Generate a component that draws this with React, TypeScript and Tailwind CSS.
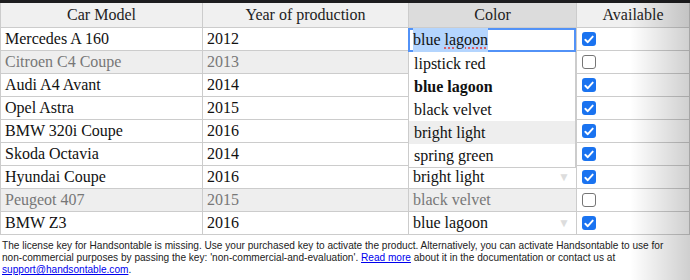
import React from "react";

type Row = { model: string; year: string; color: string; avail: boolean; ro?: boolean; arrow?: boolean };

const rows: Row[] = [
  { model: "Mercedes A 160", year: "2012", color: "blue lagoon", avail: true },
  { model: "Citroen C4 Coupe", year: "2013", color: "", avail: false, ro: true },
  { model: "Audi A4 Avant", year: "2014", color: "", avail: true },
  { model: "Opel Astra", year: "2015", color: "", avail: true },
  { model: "BMW 320i Coupe", year: "2016", color: "", avail: true },
  { model: "Skoda Octavia", year: "2014", color: "", avail: true },
  { model: "Hyundai Coupe", year: "2016", color: "bright light", avail: true, arrow: true },
  { model: "Peugeot 407", year: "2015", color: "black velvet", avail: false, ro: true },
  { model: "BMW Z3", year: "2016", color: "blue lagoon", avail: true, arrow: true },
];

function Check({ on }: { on: boolean }) {
  if (on)
    return (
      <div className="w-[14px] h-[14px] rounded-[3px] bg-[#1a73f0] flex items-center justify-center">
        <svg width="10" height="9" viewBox="0 0 10 9">
          <path d="M1.3 4.8 L3.8 7.2 L8.7 1.6" stroke="white" strokeWidth="1.9" fill="none" strokeLinecap="round" strokeLinejoin="round" />
        </svg>
      </div>
    );
  return <div className="w-[14px] h-[14px] rounded-[3px] border border-[#767676] bg-white" />;
}

export default function App() {
  const cell = "border-r border-b border-[#cccccc] h-[23px] px-[4px] flex items-center whitespace-nowrap overflow-hidden";
  return (
    <div className="relative w-[690px] h-[280px] bg-white overflow-hidden" style={{ fontFamily: '"Liberation Serif", serif' }}>
      <div className="h-[3px] bg-[#1d1d1f]" />
      <div className="grid grid-cols-[202px_206px_168px_1fr] border-l border-[#cccccc] text-[16px] text-[#111]">
        <div className="border-r border-b border-[#cccccc] h-[25px] flex items-center justify-center bg-[#f0f0f0] text-[#222]">Car Model</div>
        <div className="border-r border-b border-[#cccccc] h-[25px] flex items-center justify-center bg-[#f0f0f0] text-[#222]">Year of production</div>
        <div className="border-r border-b border-[#cccccc] h-[25px] flex items-center justify-center bg-[#dcdcdc] text-[#222]">Color</div>
        <div className="border-r border-b border-[#cccccc] h-[25px] flex items-center justify-center bg-[#f0f0f0] text-[#222]">Available</div>
        {rows.map((r, i) => (
          <React.Fragment key={i}>
            <div className={`${cell} ${r.ro ? "bg-[#eeeeee] text-[#777]" : ""}`}>{r.model}</div>
            <div className={`${cell} ${r.ro ? "bg-[#eeeeee] text-[#777]" : ""}`}>{r.year}</div>
            <div className={`${cell} justify-between ${r.ro ? "bg-[#eeeeee] text-[#777]" : ""}`}>
              <span>{r.color}</span>
              {r.arrow && <span className="text-[12px] text-[#dddddd] mr-[2px]">▼</span>}
            </div>
            <div className={`${cell} pl-[5px]`}>
              <Check on={r.avail} />
            </div>
          </React.Fragment>
        ))}
      </div>
      <div className="px-[2px] pt-[5px] text-[10.1px] leading-[12px] text-[#222] w-[676px]" style={{ fontFamily: '"Liberation Sans", Arial, sans-serif' }}>
        The license key for Handsontable is missing. Use your purchased key to activate the product. Alternatively, you can activate Handsontable to use for non-commercial purposes by passing the key: 'non-commercial-and-evaluation'.{" "}
        <span className="text-[#0000ee] underline">Read more</span> about it in the documentation or contact us at{" "}
        <span className="text-[#0000ee] underline">support@handsontable.com</span>.
      </div>

      {/* editor input */}
      <div className="absolute left-[408px] top-[28px] w-[168px] h-[24px] border-2 border-[#5292f7] bg-white flex items-center pl-[3px] text-[16px] text-[#111]">
        <span className="bg-[#b4d5fe]">
          blue <span className="underline decoration-dotted decoration-[#e53935] underline-offset-[3px]">lagoon</span>
        </span>
      </div>
      {/* dropdown list */}
      <div className="absolute left-[408px] top-[52px] w-[168px] bg-white border-l border-b border-r border-[#cccccc] text-[16px] text-[#111]">
        {["lipstick red", "blue lagoon", "black velvet", "bright light", "spring green"].map((c, i) => (
          <div
            key={c}
            className={`h-[23px] flex items-center pl-[5px] ${i === 1 ? "font-bold" : ""} ${i === 3 ? "bg-[#eeeeee]" : ""}`}
          >
            {c}
          </div>
        ))}
      </div>
      {/* right edge shading */}
      <div className="absolute right-0 top-0 h-full w-[60px] bg-gradient-to-r from-transparent to-[#00000030] pointer-events-none" />
    </div>
  );
}
